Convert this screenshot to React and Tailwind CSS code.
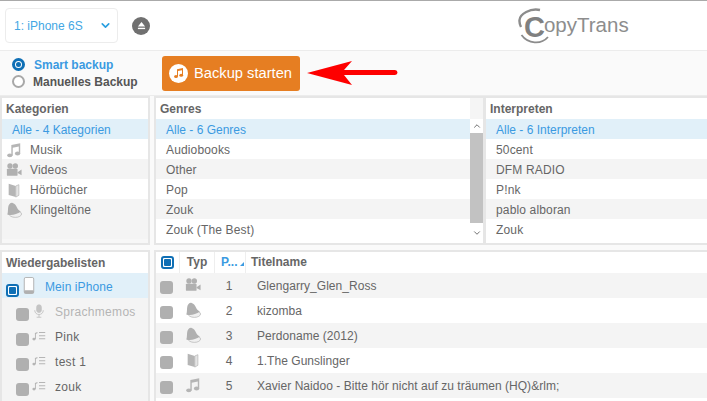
import { ChevronDown, ChevronUp } from 'lucide-react'

const FONT = 'font-["Liberation_Sans",Arial,sans-serif]'

const categories = [
  { name: 'Musik', icon: NoteIcon },
  { name: 'Videos', icon: CameraIcon },
  { name: 'Hörbücher', icon: BookIcon },
  { name: 'Klingeltöne', icon: BellIcon },
]
const genres = ['Audiobooks', 'Other', 'Pop', 'Zouk', 'Zouk (The Best)']
const artists = ['50cent', 'DFM RADIO', 'P!nk', 'pablo alboran', 'Zouk']
const playlists = [
  { name: 'Sprachmemos', icon: MicIcon, muted: true },
  { name: 'Pink', icon: PlaylistIcon },
  { name: 'test 1', icon: PlaylistIcon },
  { name: 'zouk', icon: PlaylistIcon },
]
const tracks = [
  { pos: 1, icon: CameraIcon, title: 'Glengarry_Glen_Ross' },
  { pos: 2, icon: BellIcon, title: 'kizomba' },
  { pos: 3, icon: BellIcon, title: 'Perdoname (2012)' },
  { pos: 4, icon: BookIcon, title: '1.The Gunslinger' },
  { pos: 5, icon: NoteIcon, title: 'Xavier Naidoo - Bitte hör nicht auf zu träumen (HQ)&rlm;' },
]

function NoteIcon({ className }) {
  return (
    <svg viewBox="0 0 18 18" className={className} fill="#b5b5b5">
      <path d="M6 3.5 16 1.5V13h-1.6V5L7.6 6.4V15H6z" />
      <ellipse cx="4.3" cy="15" rx="3" ry="2.2" />
      <ellipse cx="13" cy="13" rx="3" ry="2.2" />
    </svg>
  )
}

function CameraIcon({ className }) {
  return (
    <svg viewBox="0 0 18 18" className={className} fill="#b0b0b0">
      <circle cx="4.5" cy="4.5" r="3" />
      <circle cx="10.5" cy="4.5" r="3" />
      <rect x="1" y="7.5" width="12" height="8" rx="1" />
      <path d="M13 11.5 17.5 8.5V15l-4.5-2.5z" />
    </svg>
  )
}

function BookIcon({ className }) {
  return (
    <svg viewBox="0 0 18 18" className={className}>
      <path d="M3 2 11 4.5V17L3 14.5z" fill="#b5b5b5" />
      <path d="M11 4.5 14.5 3V15L11 17z" fill="#e4e4e4" stroke="#b5b5b5" strokeWidth="0.8" />
    </svg>
  )
}

function BellIcon({ className }) {
  return (
    <svg viewBox="0 0 18 18" className={className}>
      <ellipse cx="10.5" cy="13.5" rx="7" ry="3.8" fill="#f0f0f0" stroke="#b5b5b5" strokeWidth="0.8" />
      <path d="M1.5 14C2.5 11 2 8 2.5 5.5 3 2.5 5 .5 7.5 1 10 1.5 11.5 4 12.5 6.5c.8 2 2.5 3 4 4.5-4 3-11 4.5-15 3z" fill="#b0b0b0" />
    </svg>
  )
}

function MicIcon({ className }) {
  return (
    <svg viewBox="0 0 18 18" className={className} fill="none" stroke="#c4c4c4">
      <rect x="6" y="1" width="6" height="10" rx="3" fill="#c4c4c4" />
      <path d="M3.5 8c0 3.5 2.5 5.5 5.5 5.5s5.5-2 5.5-5.5M9 13.5V17M6 17h6" strokeWidth="1.2" />
    </svg>
  )
}

function PlaylistIcon({ className }) {
  return (
    <svg viewBox="0 0 18 14" className={className} fill="#b5b5b5">
      <ellipse cx="2.6" cy="11" rx="2.1" ry="1.7" />
      <path d="M3.8 3H5v8H3.8z" />
      <path d="M3.8 3 7 2v1.6L3.8 4.6z" />
      <path d="M9 2h8v1.2H9zM9 6h8v1.2H9zM9 10h8v1.2H9z" />
    </svg>
  )
}

function PhoneIcon({ className }) {
  return (
    <svg viewBox="0 0 12 18" className={className}>
      <rect x="1" y="0.5" width="10" height="17" rx="1.6" fill="#fff" stroke="#b0b0b0" />
      <rect x="1" y="14" width="10" height="3.5" rx="1" fill="#b0b0b0" />
    </svg>
  )
}

function Check({ checked, className = '' }) {
  if (checked) {
    return (
      <span className={`flex h-[13px] w-[13px] shrink-0 items-center justify-center rounded-[3px] border-2 border-[#0f6fb5] bg-white ${className}`}>
        <span className="h-[7px] w-[7px] rounded-[1px] bg-[#0f6fb5]" />
      </span>
    )
  }
  return <span className={`block h-[13px] w-[13px] shrink-0 rounded-[3px] bg-[#b0b0b0] ${className}`} />
}

function Panel({ title, width, children, className = '' }) {
  return (
    <div className={`flex flex-col overflow-hidden border-2 border-[#e6e6e6] bg-white ${width} ${className}`}>
      {title && <div className="flex h-[21px] shrink-0 items-center px-1 text-xs font-bold text-[#666]">{title}</div>}
      {children}
    </div>
  )
}

function ListRows({ all, items }) {
  return (
    <div className="flex flex-col text-xs text-[#666]">
      <div className="flex h-5 items-center bg-[#e1f0f9] pl-[10px] pt-px text-[#3b9ae1]">{all}</div>
      {items.map((item, i) => (
        <div key={item} className={`flex h-5 items-center pl-[10px] pt-px tracking-[0.15px] ${i % 2 ? 'bg-[#f4f4f4]' : 'bg-white'}`}>
          {item}
        </div>
      ))}
    </div>
  )
}

export default function App() {
  return (
    <div className={`flex h-[401px] w-[707px] flex-col overflow-hidden bg-white ${FONT}`}>
      {/* header */}
      <div className="flex h-[51px] shrink-0 items-center border-t-[1px] border-b-[1px] border-t-[#aaa] border-b-[#ececec] bg-white pl-[5px]">
        <div className="flex h-[35px] w-[113px] items-center justify-between rounded-[4px] border border-[#ececec] pl-[8px] pr-[5px] text-xs text-[#43a7e4]">
          <span>1: iPhone 6S</span>
          <ChevronDown size={13} strokeWidth={3} className="text-[#2a9fe0]" />
        </div>
        <span className="ml-[14px] flex h-[18px] w-[18px] items-center justify-center rounded-full bg-[#707070]">
          <svg viewBox="0 0 10 10" className="h-[9px] w-[9px]" fill="#fff">
            <path d="M5 1 9 6H1z" />
            <rect x="1" y="7.5" width="8" height="1.5" />
          </svg>
        </span>
        <div className="relative ml-auto mr-[77px] flex h-[36px] w-[112px] items-center">
          <svg viewBox="0 0 36 36" className="absolute left-0 top-0 h-[36px] w-[36px]" fill="none" stroke="#8c8c8c">
            <path d="M22 2C12 -0 2 6 1.5 12 1.2 15 2 17 3 19" strokeWidth="2.4" />
            <path d="M3.5 27C10 36 23 37 30 29" strokeWidth="1.8" />
          </svg>
          <span className="ml-[6px] mt-[3px] text-[29px] font-bold leading-none text-[#808080]">C</span>
          <span className="ml-[-1px] text-[20.5px] leading-none text-[#8d8d8d]">opyTrans</span>
        </div>
      </div>

      {/* toolbar */}
      <div className="flex h-[45px] shrink-0 items-center border-b-[1px] border-[#ececec] bg-[#fafafa] pl-3">
        <div className="flex w-[150px] flex-col gap-[3px] text-xs font-bold">
          <label className="flex h-[14px] items-center gap-[9px] text-[#3b9ae1]">
            <span className="flex h-[13px] w-[13px] items-center justify-center rounded-full border-[3px] border-[#0f6fb5] bg-white">
              <span className="h-[5px] w-[5px] rounded-full bg-[#0f6fb5]" />
            </span>
            Smart backup
          </label>
          <label className="flex h-[14px] items-center gap-2 text-[#555]">
            <span className="h-[13px] w-[13px] rounded-full border-[2px] border-[#a8a8a8] bg-white" />
            Manuelles Backup
          </label>
        </div>
        <button type="button" className="flex h-[35px] w-[138px] items-center rounded-[3px] bg-[#e67e22] pl-[7px] text-[14.7px] text-white">
          <span className="mr-[6px] flex h-[19px] w-[19px] items-center justify-center rounded-full bg-white">
            <svg viewBox="0 0 12 12" className="h-[12px] w-[12px]" fill="#e67e22">
              <path d="M4 2.2 10 1v7H9V3.3L5 4.1V9.5H4z" />
              <ellipse cx="3" cy="9.6" rx="1.9" ry="1.5" />
              <ellipse cx="8.2" cy="8.2" rx="1.9" ry="1.5" />
            </svg>
          </span>
          Backup starten
        </button>
        <svg viewBox="0 0 92 24" className="ml-[7px] h-[24px] w-[92px]">
          <path d="M0 12 45 0 37 9H88a2.5 2.5 0 0 1 0 5H37l8 10z" fill="#fe0000" />
        </svg>
      </div>

      {/* upper lists */}
      <div className="flex h-[154px] shrink-0 bg-[#fafafa] pb-[5px]">
        <Panel title="Kategorien" width="w-[150px]">
          <div className="flex flex-1 flex-col bg-[#f7f7f7] text-xs text-[#666]">
            <div className="flex h-5 items-center bg-[#e1f0f9] pl-[10px] pt-px text-[#3b9ae1]">Alle - 4 Kategorien</div>
            {categories.map((c, i) => (
              <div key={c.name} className={`flex h-5 items-center gap-[8px] pl-1 pt-px tracking-[0.15px] ${i % 2 ? 'bg-[#f4f4f4]' : 'bg-white'}`}>
                <c.icon className="h-[16px] w-[16px]" />
                {c.name}
              </div>
            ))}
            <div className="h-5 bg-[#f4f4f4]" />
          </div>
        </Panel>
        <Panel title="Genres" width="ml-[4px] w-[331px]" className="relative">
          <ListRows all="Alle - 6 Genres" items={genres} />
          <div className="absolute bottom-0 right-0 top-0 flex w-[13px] flex-col items-center bg-white">
            <div className="h-[21px] w-full shrink-0 bg-[#f5f5f5]" />
            <ChevronUp size={10} className="my-[2px] text-[#555]" />
            <div className="w-full flex-1 bg-[#c2c2c2]" />
            <ChevronDown size={10} className="my-[5px] text-[#555]" />
          </div>
        </Panel>
        <Panel title="Interpreten" width="flex-1" className="-ml-px border-r-0">
          <ListRows all="Alle - 6 Interpreten" items={artists} />
        </Panel>
      </div>

      {/* lower lists */}
      <div className="flex min-h-0 flex-1 bg-[#fafafa]">
        <Panel title="Wiedergabelisten" width="w-[150px]" className="border-b-0">
          <div className="flex flex-1 flex-col bg-[#f4f4f4] text-xs text-[#666]">
            <div className="flex h-[25px] shrink-0 items-center bg-[#e1f0f9] pl-1 text-[#3b9ae1]">
              <Check checked className="mt-[9px]" />
              <PhoneIcon className="ml-[4px] mb-[1px] h-[17px] w-[12px]" />
              <span className="ml-[10px] mt-[2px] tracking-[0.1px]">Mein iPhone</span>
            </div>
            {playlists.map(p => (
              <div key={p.name} className="flex h-[25px] shrink-0 items-center pl-[14px]">
                <Check className="mt-[8px]" />
                <span className="ml-[3px] flex w-[14px] justify-center">
                  <p.icon className="h-[14px] w-[14px]" />
                </span>
                <span className={`ml-[9px] mt-[2px] tracking-[0.3px] ${p.muted ? 'text-[#b5b5b5]' : ''}`}>{p.name}</span>
              </div>
            ))}
          </div>
        </Panel>
        <Panel width="ml-[4px] flex-1" className="border-b-0 border-r-0">
          <div className="flex h-[21px] shrink-0 items-center text-xs font-bold text-[#666]">
            <div className="flex h-full w-[24px] items-center justify-center border-r border-[#eee]"><Check checked /></div>
            <div className="flex h-full w-[35px] items-center justify-center border-r border-[#eee] pb-px">Typ</div>
            <div className="relative flex h-full w-[31px] items-center border-r border-[#eee] pb-px pl-[6px] text-[#3b9ae1]">
              P...
              <span className="absolute bottom-[7px] right-[1px] h-0 w-0 border-b-[4px] border-l-[4px] border-b-[#3b9ae1] border-l-transparent" />
            </div>
            <div className="pb-px pl-[5px]">Titelname</div>
          </div>
          <div className="flex flex-col text-xs text-[#666]">
            {tracks.map((t, i) => (
              <div key={t.pos} className={`flex h-[25px] shrink-0 items-center ${i % 2 ? 'bg-white' : 'bg-[#f4f4f4]'}`}>
                <div className="flex w-[21px] justify-center pt-[4px]"><Check /></div>
                <div className="flex w-[32px] justify-center pb-[1px]"><t.icon className="h-[16px] w-[16px]" /></div>
                <div className="w-[40px] text-center">{t.pos}</div>
                <div className="whitespace-nowrap pl-[8px] tracking-[0.04px]">{t.title}</div>
              </div>
            ))}
          </div>
        </Panel>
      </div>
    </div>
  )
}
